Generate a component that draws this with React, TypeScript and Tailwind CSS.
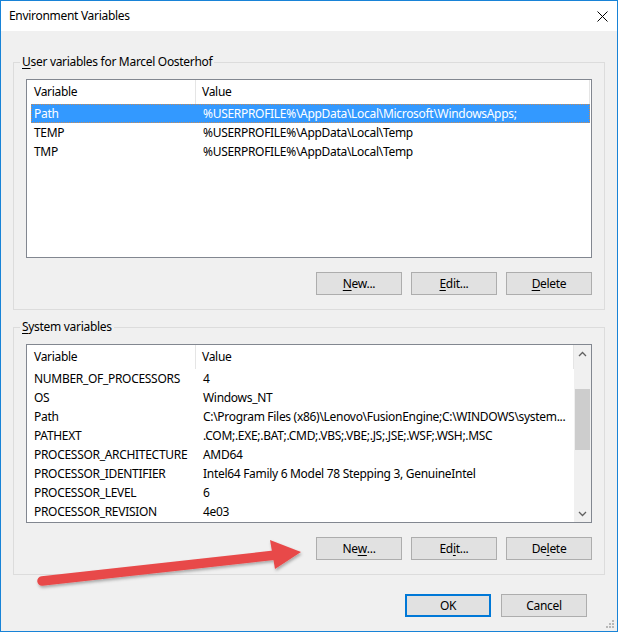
import React from "react";

interface EnvVar {
  name: string;
  value: string;
}

const userVars: EnvVar[] = [
  { name: "Path", value: "%USERPROFILE%\\AppData\\Local\\Microsoft\\WindowsApps;" },
  { name: "TEMP", value: "%USERPROFILE%\\AppData\\Local\\Temp" },
  { name: "TMP", value: "%USERPROFILE%\\AppData\\Local\\Temp" },
];

const systemVars: EnvVar[] = [
  { name: "NUMBER_OF_PROCESSORS", value: "4" },
  { name: "OS", value: "Windows_NT" },
  { name: "Path", value: "C:\\Program Files (x86)\\Lenovo\\FusionEngine;C:\\WINDOWS\\system..." },
  { name: "PATHEXT", value: ".COM;.EXE;.BAT;.CMD;.VBS;.VBE;.JS;.JSE;.WSF;.WSH;.MSC" },
  { name: "PROCESSOR_ARCHITECTURE", value: "AMD64" },
  { name: "PROCESSOR_IDENTIFIER", value: "Intel64 Family 6 Model 78 Stepping 3, GenuineIntel" },
  { name: "PROCESSOR_LEVEL", value: "6" },
  { name: "PROCESSOR_REVISION", value: "4e03" },
];

// label with one underlined mnemonic letter, e.g. ("New...", 0)
function Mnemonic({ text, at }: { text: string; at: number }) {
  return (
    <>
      {text.slice(0, at)}
      <span className="underline underline-offset-[2px]">{text[at]}</span>
      {text.slice(at + 1)}
    </>
  );
}

function WinButton({ text, at, primary }: { text: string; at?: number; primary?: boolean }) {
  return (
    <button
      className={
        primary
          ? "w-[86px] h-[23px] bg-[#e1e1e1] border-2 border-[#0078d7] flex items-center justify-center"
          : "w-[86px] h-[23px] bg-[#e1e1e1] border border-[#adadad] flex items-center justify-center"
      }
    >
      {at === undefined ? text : <Mnemonic text={text} at={at} />}
    </button>
  );
}

function GroupBox({ label, children }: { label: React.ReactNode; children: React.ReactNode }) {
  return (
    <fieldset className="min-w-0 border border-[#dcdcdc] px-[12px] pb-[14px]">
      <legend className="-ml-[6px] px-[2px] leading-[16px]">{label}</legend>
      {children}
    </fieldset>
  );
}

function ListHeader() {
  return (
    <div className="flex h-[24px] shrink-0">
      <div className="w-[165px] pl-[3px] flex items-center border-r border-[#e5e5e5]">Variable</div>
      <div className="flex-1 pl-[6px] flex items-center border-r border-[#e5e5e5]">Value</div>
    </div>
  );
}

function ListRow({ v, selected }: { v: EnvVar; selected?: boolean }) {
  return (
    <div
      className={
        selected
          ? "flex h-[19px] items-center bg-[#3399ff] text-white border border-dotted border-[#c98a55]"
          : "flex h-[19px] items-center border border-transparent"
      }
    >
      <div className="w-[165px] pl-[2px] whitespace-nowrap">{v.name}</div>
      <div className="flex-1 min-w-0 pl-[6px] whitespace-nowrap overflow-hidden">{v.value}</div>
    </div>
  );
}

function Chevron({ up }: { up?: boolean }) {
  return (
    <svg width="9" height="6" viewBox="0 0 9 6">
      <path
        d={up ? "M1 5 L4.5 1.5 L8 5" : "M1 1 L4.5 4.5 L8 1"}
        fill="none"
        stroke="#606060"
        strokeWidth="1.3"
      />
    </svg>
  );
}

export default function App() {
  return (
    <div
      className="relative w-[618px] h-[632px] border border-[#1883d7] bg-[#f0f0f0] flex flex-col text-[12px] tracking-[-0.3px] text-black"
      style={{ fontFamily: '"Segoe UI", "Noto Sans", sans-serif' }}
    >
      <div className="h-[30px] shrink-0 bg-white flex items-center justify-between pl-[8px] pr-[9px]">
        <span>Environment Variables</span>
        <svg width="11" height="11" viewBox="0 0 11 11">
          <path d="M0.5 0.5 L10.5 10.5 M10.5 0.5 L0.5 10.5" stroke="#000" strokeWidth="1" />
        </svg>
      </div>

      <div className="flex-1 flex flex-col px-[12px] pt-[23px]">
        <GroupBox label={<Mnemonic text="User variables for Marcel Oosterhof" at={0} />}>
          <div className="mt-[9px] h-[179px] border border-[#828790] bg-white pl-[4px] pr-[1px] flex flex-col overflow-hidden">
            <ListHeader />
            {userVars.map((v, i) => (
              <ListRow key={v.name} v={v} selected={i === 0} />
            ))}
          </div>
          <div className="mt-[14px] flex justify-end gap-[9px]">
            <WinButton text="New..." at={0} />
            <WinButton text="Edit..." at={0} />
            <WinButton text="Delete" at={0} />
          </div>
        </GroupBox>

        <div className="mt-[9px]">
          <GroupBox label={<Mnemonic text="System variables" at={0} />}>
            <div className="mt-[9px] h-[179px] border border-[#828790] bg-white pl-[4px] flex overflow-hidden">
              <div className="flex-1 min-w-0 flex flex-col">
                <ListHeader />
                {systemVars.map((v) => (
                  <ListRow key={v.name} v={v} />
                ))}
              </div>
              <div className="w-[17px] shrink-0 bg-[#f0f0f0] flex flex-col">
                <div className="h-[17px] flex items-center justify-center">
                  <Chevron up />
                </div>
                <div className="flex-1">
                  <div className="mt-[27px] h-[61px] mx-[1px] bg-[#cdcdcd]" />
                </div>
                <div className="h-[17px] flex items-center justify-center">
                  <Chevron />
                </div>
              </div>
            </div>
            <div className="mt-[14px] flex justify-end gap-[9px]">
              <WinButton text="New..." at={2} />
              <WinButton text="Edit..." at={2} />
              <WinButton text="Delete" at={2} />
            </div>
          </GroupBox>
        </div>

        <div className="mt-[19px] pr-[18px] flex justify-end gap-[10px]">
          <WinButton text="OK" primary />
          <WinButton text="Cancel" />
        </div>
      </div>

      {/* resize grip */}
      <svg className="absolute right-[2px] bottom-[2px]" width="9" height="9" viewBox="0 0 9 9">
        <g fill="#b8b8b8">
          <rect x="6" y="0" width="2" height="2" />
          <rect x="3" y="3" width="2" height="2" />
          <rect x="6" y="3" width="2" height="2" />
          <rect x="0" y="6" width="2" height="2" />
          <rect x="3" y="6" width="2" height="2" />
          <rect x="6" y="6" width="2" height="2" />
        </g>
      </svg>

      {/* red annotation arrow pointing at the system "New..." button */}
      <svg
        className="absolute left-0 top-0 pointer-events-none"
        width="618"
        height="632"
        viewBox="1 1 618 632"
      >
        <defs>
          <filter id="arrowShadow" x="-10%" y="-50%" width="120%" height="200%">
            <feDropShadow dx="1" dy="2" stdDeviation="1.5" floodColor="#000" floodOpacity="0.3" />
          </filter>
        </defs>
        <g filter="url(#arrowShadow)" fill="#e84a4a">
          <line x1="42" y1="581" x2="276" y2="555" stroke="#e84a4a" strokeWidth="9.5" strokeLinecap="round" />
          <polygon points="270,540 301,552 275,569" />
        </g>
      </svg>
    </div>
  );
}
